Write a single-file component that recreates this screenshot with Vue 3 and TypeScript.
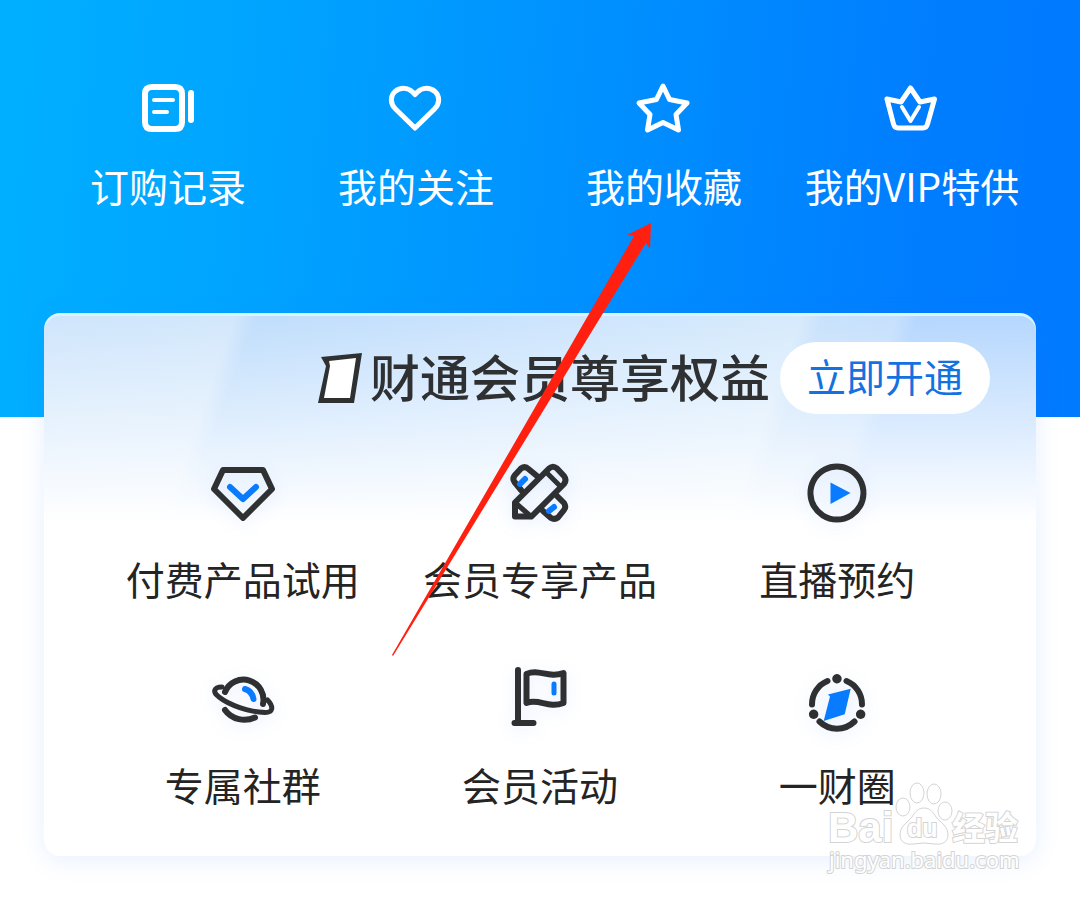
<script setup lang="ts">
interface Shape {
  d: string
  accent?: boolean
  solid?: boolean
  width?: number
}

interface Entry {
  label: string
  shapes: Shape[]
}

const shortcuts: Entry[] = [
  {
    label: '订购记录',
    shapes: [
      { d: 'M14 9H37Q44 9 44 16V44Q44 51 37 51H14Q7 51 7 44V16Q7 9 14 9Z', width: 6 },
      { d: 'M53 15V42', width: 6 },
      { d: 'M16 22H35M16 34H29', width: 4 },
    ],
  },
  {
    label: '我的关注',
    shapes: [
      { d: 'M29 50L9.500 31C4 25.500 4 18 9 13.500C14.500 9 22 9.500 26.500 14L29 16.500L31.500 14C36 9.500 43.500 9 49 13.500C54 18 54 25.500 48.500 31Z' },
    ],
  },
  {
    label: '我的收藏',
    shapes: [
      { d: 'M29 8L35.500 21.500L53 25L42 36.500L44.500 52L29 44.500L13.500 52L16 36.500L5 25L22.500 21.500Z' },
    ],
  },
  {
    label: '我的VIP特供',
    shapes: [
      { d: 'M5 21L19 24L28.500 10L38 24L52.500 21L45.500 46Q44.500 50 41 50H16Q12.500 50 11.500 46Z' },
      { d: 'M20 29L28.500 43L37 29', width: 4 },
    ],
  },
]

const benefits: Entry[] = [
  {
    label: '付费产品试用',
    shapes: [
      { d: 'M16 13H56L65 32L36 61L7 32Z' },
      { d: 'M23 30L36 42L49 30', accent: true },
    ],
  },
  {
    label: '会员专享产品',
    shapes: [
      { d: 'M17 33L10.500 25Q8 21.500 11 18L17 11.500Q21 8.500 24.500 12L33 19' },
      { d: 'M39 54L47 61Q50.500 63 54 60.500L60 53Q62.500 50 60 46L53 39' },
      { d: 'M11 59.500V45.500L45 11.500Q49 8 53 11.500L60 19Q63 23 60 27L27.500 59.500Z' },
      { d: 'M11 45.500L27 59.500M43 16L56 29', width: 5 },
      { d: 'M16 27L21 22M45 54L50 50', accent: true },
    ],
  },
  {
    label: '直播预约',
    shapes: [
      { d: 'M36 9.500A26.500 26.500 0 1 1 35.900 9.500Z' },
      { d: 'M29.500 25.500L49.500 36L29.500 47Z', accent: true, solid: true },
    ],
  },
  {
    label: '专属社群',
    shapes: [
      { d: 'M18 29A20 20 0 0 1 56 41' },
      { d: 'M15 24C7 24 5 29 12 34C22 42 42 49 58 49.500C66 49.500 67 44 60.500 37', width: 5 },
      { d: 'M18 47C25 57 38 59 48 54.500' },
      { d: 'M38 26Q45 28 46.500 36', accent: true },
    ],
  },
  {
    label: '会员活动',
    shapes: [
      { d: 'M14 7V60M10.500 60H29.500' },
      { d: 'M22.500 11C35 5 44 16 59.500 10V40C44 46 35 35 22.500 40Z' },
      { d: 'M50 21V30', accent: true, width: 5 },
    ],
  },
  {
    label: '一财圈',
    shapes: [
      { d: 'M26.500 18A25 25 0 0 0 11 41.500M45.500 18A25 25 0 0 1 61 41.500M18.500 58.500A25 25 0 0 0 53.500 58.500', width: 6 },
      { d: 'M36 11A4.700 4.700 0 1 1 35.900 11ZM12.700 46.600A4.700 4.700 0 1 1 12.600 46.600ZM59.700 46.600A4.700 4.700 0 1 1 59.600 46.600Z', solid: true },
      { d: 'M27 31.500L49.700 25.700L43.700 51.300L22.700 58L29 33.500Z', accent: true, solid: true },
    ],
  },
]
</script>

<template>
  <main class="page">
    <header class="hero">
      <nav class="shortcuts">
        <a v-for="item in shortcuts" :key="item.label" class="shortcut" href="#">
          <svg class="shortcut-icon" viewBox="0 0 60 60" aria-hidden="true">
            <path v-for="s in item.shapes" :key="s.d" :d="s.d" :stroke-width="s.width ?? 5" />
          </svg>
          <span>{{ item.label }}</span>
        </a>
      </nav>
    </header>

    <section class="card">
      <div class="card-head">
        <svg class="badge" viewBox="0 0 44 52" aria-hidden="true">
          <path fill="#2f3032" d="M3 5L44 1L36 51H0L8 14Z" />
          <path fill="#fff" d="M11 9L38 6L32 46H6L12 14Z" />
        </svg>
        <h1 class="title">财通会员尊享权益</h1>
        <button class="open" type="button">立即开通</button>
      </div>
      <div class="benefits">
        <a v-for="item in benefits" :key="item.label" class="benefit" href="#">
          <svg class="benefit-icon" viewBox="0 0 72 72" aria-hidden="true">
            <path
              v-for="s in item.shapes"
              :key="s.d"
              :d="s.d"
              :class="{ accent: s.accent, solid: s.solid }"
              :stroke-width="s.width ?? 6"
            />
          </svg>
          <span>{{ item.label }}</span>
        </a>
      </div>
    </section>

    <svg class="arrow" viewBox="0 0 260 436" aria-hidden="true">
      <path fill="#ff2010" d="M259 2L235 14L242 15L0 434L1 435L254 22L258 28Z" />
    </svg>

    <svg class="watermark" viewBox="0 0 200 100" aria-hidden="true">
      <g class="mark">
        <text x="2" y="63" class="mark-brand">Bai</text>
        <ellipse cx="77" cy="28" rx="7" ry="9" />
        <ellipse cx="91" cy="14" rx="7" ry="10" />
        <ellipse cx="108" cy="15" rx="7" ry="10" />
        <ellipse cx="119" cy="32" rx="7" ry="9" />
        <path d="M98 29C104 29 107 33 110 38C115 44 122 47 122 56C122 63 116 66 109 65Q98 63 87 65C80 66 74 63 74 56C74 47 81 44 86 38C89 33 92 29 98 29Z" />
        <text x="81" y="58" class="mark-du">du</text>
        <text x="126" y="61" class="mark-cn">经验</text>
        <text x="3" y="89" class="mark-url">jingyan.baidu.com</text>
      </g>
    </svg>
  </main>
</template>

<style>
body {
  margin: 0;
  background: #fff;
}
</style>

<style scoped>
.page {
  position: relative;
  overflow: hidden;
  padding-bottom: 43px;
  font-family: "Noto Sans CJK SC", sans-serif;
  font-size: 39px;
  line-height: 50px;
}

a {
  text-decoration: none;
}

.hero {
  padding: 78px 44px 207px;
  background: linear-gradient(95deg, #00b0ff 0%, #00a5ff 22%, #0090ff 55%, #007dff 85%, #007aff 100%);
}

.shortcuts {
  display: grid;
  grid-template-columns: repeat(4, 1fr);
}

.shortcut,
.benefit {
  display: flex;
  flex-direction: column;
  align-items: center;
  white-space: nowrap;
}

.shortcut {
  gap: 22px;
  color: #fff;
}

.shortcut-icon {
  width: 60px;
  height: 60px;
  fill: none;
  stroke: #fff;
  stroke-linecap: round;
  stroke-linejoin: round;
}

.card {
  position: relative;
  margin: -104px 44px 0;
  padding: 29px 0 41px;
  border-radius: 16px;
  background:
    linear-gradient(to bottom, rgba(255, 255, 255, 0) 0, rgba(255, 255, 255, 0.5) 110px, #fff 210px) 0 0 / 100% 210px no-repeat,
    linear-gradient(110deg, #cee5fc 0%, #d2e7fc 18%, #bfddfc 20%, #c8e2fd 40%, #d6eafc 71%, #c8e1fc 73%, #c4dffd 80%, #b4d6fe 82%, #b6d7fe 100%) 0 0 / 100% 210px no-repeat,
    #fff;
  box-shadow: inset 0 3px 0 #d8f6ff, 0 4px 24px rgba(60, 130, 255, 0.12);
}

.card-head {
  display: flex;
  align-items: center;
  justify-content: flex-end;
  padding-right: 46px;
}

.badge {
  width: 44px;
  height: 52px;
  margin-right: 8px;
}

.title {
  margin: 0 10px 0 0;
  padding-bottom: 6px;
  color: #2f3032;
  font-size: 50px;
  font-weight: 500;
  line-height: 66px;
  white-space: nowrap;
}

.open {
  width: 210px;
  height: 72px;
  padding: 0 0 6px;
  border: 0;
  border-radius: 36px;
  background: #fff;
  color: #1472e0;
  font: inherit;
}

.benefits {
  display: grid;
  grid-template-columns: repeat(3, 1fr);
  row-gap: 60px;
  padding: 43px 50px 6px;
}

.benefit {
  gap: 24px;
  color: #242424;
}

.benefit-icon {
  width: 72px;
  height: 72px;
  fill: none;
  stroke: #2f3032;
  stroke-linecap: round;
  stroke-linejoin: round;
  filter: drop-shadow(0 4px 8px rgba(40, 110, 255, 0.1));
}

.accent {
  stroke: #087bff;
}

.solid {
  fill: #2f3032;
  stroke: none;
}

.accent.solid {
  fill: #087bff;
}

.arrow {
  position: absolute;
  top: 221px;
  left: 392px;
  width: 260px;
  height: 436px;
  pointer-events: none;
}

.watermark {
  position: absolute;
  right: 54px;
  bottom: 20px;
  width: 200px;
  height: 100px;
  pointer-events: none;
}

.mark {
  fill: #fff;
  fill-opacity: 0.9;
  stroke: #d4d4d4;
  stroke-width: 1;
}

.mark text {
  stroke-width: 2;
  paint-order: stroke;
  fill-opacity: 1;
}

.mark-brand {
  font: 700 42px "Liberation Sans", sans-serif;
}

.mark-du {
  font: 700 25px "Liberation Sans", sans-serif;
}

.mark-cn {
  font: 700 33px "Noto Sans CJK SC", sans-serif;
}

.mark-url {
  font: 400 22px "Noto Sans", sans-serif;
}
</style>
